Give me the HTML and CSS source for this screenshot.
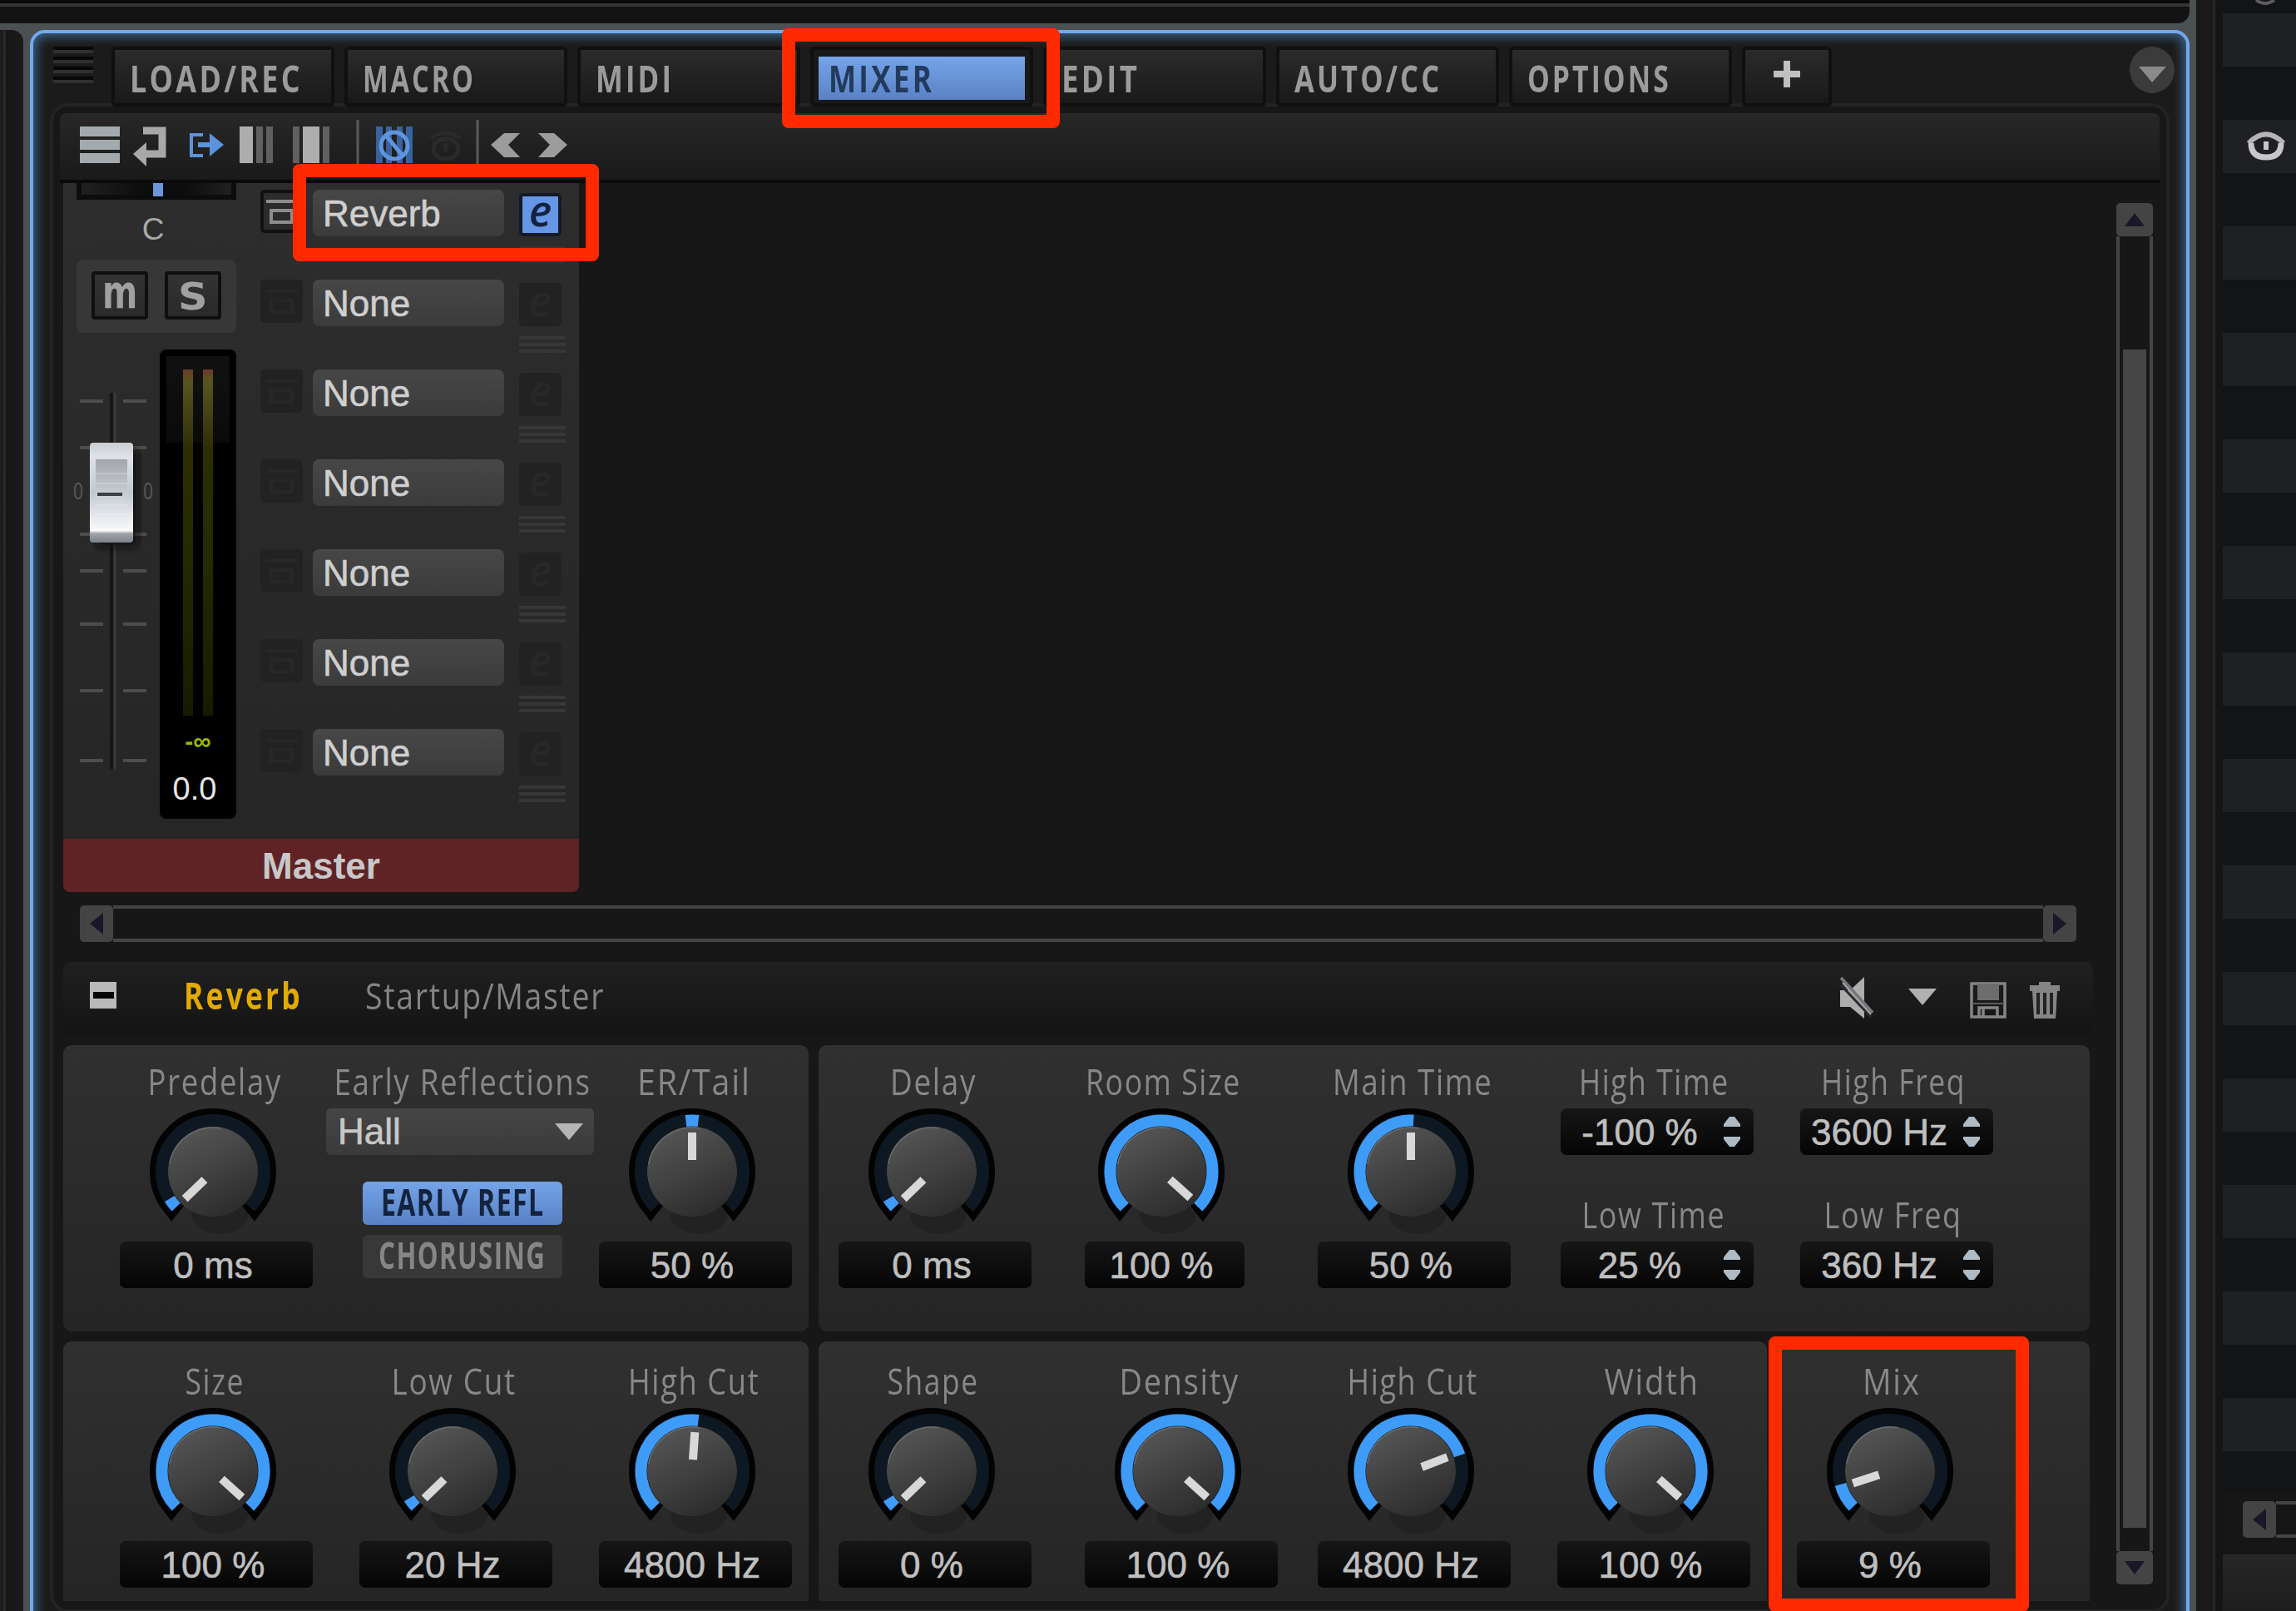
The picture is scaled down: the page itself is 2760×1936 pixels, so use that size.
FILE: index.html
```html
<!DOCTYPE html>
<html lang="en">
<head>
    <meta charset="UTF-8">
    <meta name="viewport" content="width=device-width, initial-scale=1.0">
    <title>Mixer</title>
    <link rel="stylesheet" href="styles.css">
</head>
<body>
    <div class="workspace">
        <div class="top-panel"></div>
        <div class="middle">
            <div class="left-panel"></div>
            <div class="window">
                <div class="tab-bar">
                    <div class="grip"></div>
                    <div class="tab"><span class="cond" data-w="202">LOAD/REC</span></div>
                    <div class="tab"><span class="cond" data-w="130">MACRO</span></div>
                    <div class="tab"><span class="cond" data-w="88">MIDI</span></div>
                    <div class="tab active"><span class="cond" data-w="121">MIXER</span></div>
                    <div class="tab"><span class="cond" data-w="88">EDIT</span></div>
                    <div class="tab"><span class="cond" data-w="171">AUTO/CC</span></div>
                    <div class="tab"><span class="cond" data-w="167">OPTIONS</span></div>
                    <div class="tab add">
                        <svg width="34" height="34" viewBox="0 0 34 34"><path d="M17 1v32M1 17h32" stroke="#c0c0c0" stroke-width="8"/></svg>
                    </div>
                    <div class="window-menu">
                        <svg width="54" height="56" viewBox="0 0 54 56"><ellipse cx="27" cy="28" rx="27" ry="28" fill="#3b3b3b"/><path d="M11 24h33L27 43z" fill="#8a8a8a"/></svg>
                    </div>
                </div>

                <div class="frame">
                    <div class="toolbar">
                        <svg width="624" height="60" viewBox="72 140 624 60">
                            <path d="M96 152h48v12H96zM96 168h48v12H96zM96 184h48v12H96z" fill="#a2aaae"/>
                            <path d="M172 157h23v28h-19" fill="none" stroke="#a8a8a8" stroke-width="9"/>
                            <path d="M160 185l16-14v29z" fill="#a8a8a8"/>
                            <path d="M244 162h-14v25h14" fill="none" stroke="#5c93dc" stroke-width="4"/>
                            <path d="M238 171h14v-11l17 14-17 14v-11h-14z" fill="#5c93dc"/>
                            <path d="M288 152h16v44h-16z" fill="#adadad"/>
                            <path d="M308 152h8v44h-8zM320 152h8v44h-8z" fill="#606060"/>
                            <path d="M352 152h8v44h-8zM388 152h8v44h-8z" fill="#606060"/>
                            <path d="M364 152h20v44h-20z" fill="#adadad"/>
                            <path d="M430 144v56M574 144v56" stroke="#5a5a5a" stroke-width="3"/>
                            <path d="M452 152h8v44h-8zM464 152h7v44h-7zM477 152h7v44h-7zM488 152h8v44h-8z" fill="#3a629d"/>
                            <circle cx="474" cy="175" r="16" fill="none" stroke="#5f95de" stroke-width="5"/>
                            <path d="M465 164l18 22" stroke="#5f95de" stroke-width="5"/>
                            <path d="M518 166q17-12 35 0" fill="none" stroke="#2a2a2a" stroke-width="4"/>
                            <ellipse cx="536" cy="179" rx="15" ry="12" fill="none" stroke="#2a2a2a" stroke-width="5"/>
                            <path d="M536 172v10" stroke="#2a2a2a" stroke-width="5"/>
                            <path d="M625 160h-19l-16 14 16 15h19l-14-15zM647 160h19l16 14-16 15h-19l14-15z" fill="#9c9c9c"/>
                        </svg>
                    </div>

                    <div class="body">
                        <div class="content">
                            <div class="strip">
                                <div class="strip-main">
                                    <div class="channel">
                                        <div class="pan"><div class="pan-mark"></div></div>
                                        <div class="pan-value">C</div>
                                        <div class="mute-solo">
                                            <div class="ms"><span class="m-glyph" data-w="36">m</span></div>
                                            <div class="ms"><span class="s-glyph" data-w="30">S</span></div>
                                        </div>
                                        <div class="levels">
                                            <svg class="fader" width="100" height="564" viewBox="88 420 100 564">
                                                <defs>
                                                    <linearGradient id="cap" x1="0" y1="0" x2="0" y2="1">
                                                        <stop offset="0" stop-color="#c9ced3"/><stop offset=".14" stop-color="#dfe3e7"/>
                                                        <stop offset=".5" stop-color="#c3c9cf"/><stop offset=".88" stop-color="#fafafc"/>
                                                        <stop offset=".91" stop-color="#9ea4aa"/><stop offset="1" stop-color="#7c8288"/>
                                                    </linearGradient>
                                                    <linearGradient id="capFace" x1="0" y1="0" x2="0" y2="1">
                                                        <stop offset="0" stop-color="#a3a7ab"/><stop offset=".35" stop-color="#bcc1c6"/>
                                                        <stop offset=".7" stop-color="#d8dde2"/><stop offset="1" stop-color="#f4f5f8"/>
                                                    </linearGradient>
                                                    <filter id="soft"><feGaussianBlur stdDeviation="4"/></filter>
                                                </defs>
                                                <path d="M134 472v452" stroke="#14161d" stroke-width="4"/>
                                                <path d="M138 472v452" stroke="#393a3d" stroke-width="3"/>
                                                <path d="M96 482h28m24 0h28M96 538h28m24 0h28M96 642h28m24 0h28M96 686h28m24 0h28M96 750h28m24 0h28M96 830h28m24 0h28M96 914h28m24 0h28" stroke="#4d4d4d" stroke-width="4"/>
                                                <rect x="116" y="540" width="50" height="118" rx="5" fill="#0c0c0c" opacity=".8" filter="url(#soft)"/>
                                                <rect x="108" y="532" width="52" height="120" rx="4" fill="url(#cap)"/>
                                                <rect x="115" y="552" width="38" height="82" fill="url(#capFace)"/>
                                                <path d="M115 569h38M115 581h38M115 607h38M115 618h38" stroke="#fff" stroke-width="2" opacity=".2"/>
                                                <path d="M117 594h30" stroke="#3c4044" stroke-width="4"/>
                                                <text x="88" y="600" class="fader-zero" textLength="12" lengthAdjust="spacingAndGlyphs">0</text>
                                                <text x="172" y="600" class="fader-zero" textLength="12" lengthAdjust="spacingAndGlyphs">0</text>
                                            </svg>
                                            <div class="meter">
                                                <div class="meter-bars"><i></i><i></i></div>
                                                <div class="peak">-∞</div>
                                                <div class="gain">0.0</div>
                                            </div>
                                        </div>
                                    </div>
                                    <div class="inserts" id="inserts"></div>
                                </div>
                                <div class="strip-name">Master</div>
                            </div>

                            <div class="hscroll">
                                <div class="hbtn"><svg width="16" height="26" viewBox="0 0 16 26"><path d="M16 0v26L0 13z" fill="#1a1728"/></svg></div>
                                <div class="htrack"></div>
                                <div class="hbtn"><svg width="16" height="26" viewBox="0 0 16 26"><path d="M0 0v26l16-13z" fill="#1a1728"/></svg></div>
                            </div>

                            <div class="fx-header">
                                <svg width="32" height="32" viewBox="0 0 32 32"><path d="M0 0h32v32H0z" fill="#b9b9b9"/><path d="M4 12h25v8H4z" fill="#050505"/></svg>
                                <span class="fx-name cond" data-w="137">Reverb</span>
                                <span class="fx-path cond" data-w="282">Startup/Master</span>
                                <svg class="fx-icons" width="270" height="56" viewBox="2208 1172 270 56">
                                    <path d="M2212 1190h12l17-16v50l-17-14h-12z" fill="#adadad"/>
                                    <path d="M2213 1184l36 38" stroke="#2a2a2a" stroke-width="3"/>
                                    <path d="M2213 1175l38 42" stroke="#77777d" stroke-width="4"/>
                                    <path d="M2215 1181l34 38" stroke="#a0a0a6" stroke-width="2"/>
                                    <path d="M2294 1188h34l-17 20z" fill="#b0b0b0"/>
                                    <path d="M2370 1182h40v40h-40z" fill="none" stroke="#858585" stroke-width="3.5"/>
                                    <path d="M2377 1182h26v20h-26z" fill="#6d6d6d"/>
                                    <path d="M2371 1206h38" stroke="#5c5c5c" stroke-width="2"/>
                                    <path d="M2379 1222v-11h22v11M2384 1211v11" fill="none" stroke="#858585" stroke-width="3.5"/>
                                    <path d="M2451 1180h14v4h11v7h-36v-7h11z" fill="#858585"/>
                                    <path d="M2443 1191h30l-2 33h-26z" fill="#858585"/>
                                    <path d="M2450 1193v26M2458 1193v26M2466 1193v26" stroke="#222" stroke-width="4"/>
                                </svg>
                            </div>

                            <div class="fx-row row-one">
                                <div class="fx-panel early">
                                    <div class="cell"><div class="label"><span class="cond" data-w="155">Predelay</span></div><div class="knob" data-angle="-134"></div><div class="value">0 ms</div></div>
                                    <div class="cell type">
                                        <div class="label"><span class="cond" data-w="303">Early Reflections</span></div>
                                        <div class="select">Hall<svg width="34" height="20" viewBox="0 0 34 20"><path d="M0 0h34L17 20z" fill="#b5b5b5"/></svg></div>
                                        <div class="toggle on"><span class="cond" data-w="191">EARLY REFL</span></div>
                                        <div class="toggle"><span class="cond" data-w="195">CHORUSING</span></div>
                                    </div>
                                    <div class="cell"><div class="label"><span class="cond" data-w="131">ER/Tail</span></div><div class="knob" data-angle="0" data-bipolar="1"></div><div class="value">50 %</div></div>
                                </div>
                                <div class="fx-panel tail">
                                    <div class="cell"><div class="label"><span class="cond" data-w="98">Delay</span></div><div class="knob" data-angle="-134"></div><div class="value">0 ms</div></div>
                                    <div class="cell room"><div class="label"><span class="cond" data-w="181">Room Size</span></div><div class="knob" data-angle="132"></div><div class="value">100 %</div></div>
                                    <div class="cell"><div class="label"><span class="cond" data-w="186">Main Time</span></div><div class="knob" data-angle="0"></div><div class="value">50 %</div></div>
                                    <div class="cell spins time">
                                        <div class="label"><span class="cond" data-w="175">High Time</span></div><div class="value spin">-100 %</div>
                                        <div class="label"><span class="cond" data-w="167">Low Time</span></div><div class="value spin">25 %</div>
                                    </div>
                                    <div class="cell spins">
                                        <div class="label"><span class="cond" data-w="168">High Freq</span></div><div class="value spin">3600 Hz</div>
                                        <div class="label"><span class="cond" data-w="160">Low Freq</span></div><div class="value spin">360 Hz</div>
                                    </div>
                                </div>
                            </div>

                            <div class="fx-row row-two">
                                <div class="fx-panel early">
                                    <div class="cell"><div class="label"><span class="cond" data-w="66">Size</span></div><div class="knob" data-angle="132"></div><div class="value">100 %</div></div>
                                    <div class="cell"><div class="label"><span class="cond" data-w="144">Low Cut</span></div><div class="knob" data-angle="-134"></div><div class="value">20 Hz</div></div>
                                    <div class="cell"><div class="label"><span class="cond" data-w="152">High Cut</span></div><div class="knob" data-angle="4"></div><div class="value">4800 Hz</div></div>
                                </div>
                                <div class="fx-panel shape">
                                    <div class="cell"><div class="label"><span class="cond" data-w="104">Shape</span></div><div class="knob" data-angle="-134"></div><div class="value">0 %</div></div>
                                    <div class="cell density"><div class="label"><span class="cond" data-w="138">Density</span></div><div class="knob" data-angle="132"></div><div class="value">100 %</div></div>
                                    <div class="cell"><div class="label"><span class="cond" data-w="151">High Cut</span></div><div class="knob" data-angle="69"></div><div class="value">4800 Hz</div></div>
                                    <div class="cell"><div class="label"><span class="cond" data-w="108">Width</span></div><div class="knob" data-angle="132"></div><div class="value">100 %</div></div>
                                </div>
                                <div class="fx-panel mix">
                                    <div class="cell"><div class="label"><span class="cond" data-w="64">Mix</span></div><div class="knob" data-angle="-108"></div><div class="value">9 %</div></div>
                                </div>
                            </div>
                        </div>

                        <div class="vscroll">
                            <div class="vbtn"><svg width="24" height="16" viewBox="0 0 24 16"><path d="M0 16h24L12 0z" fill="#1a1728"/></svg></div>
                            <div class="vtrack"><div class="vthumb"></div></div>
                            <div class="vbtn"><svg width="24" height="16" viewBox="0 0 24 16"><path d="M0 0h24L12 16z" fill="#1a1728"/></svg></div>
                        </div>
                    </div>
                </div>
            </div>
        </div>
    </div>

    <div class="divider"></div>

    <div class="track-list">
        <div class="track-rows">
            <svg width="26" height="8" viewBox="0 0 26 8"><path d="M2 0q11 8 22 0" fill="none" stroke="#5c5c60" stroke-width="4"/></svg>
            <svg class="eye" width="48" height="36" viewBox="0 0 48 36">
                <path d="M3 14Q24-7 45 14" fill="none" stroke="#b4b4ba" stroke-width="6"/>
                <path d="M6 14q0 17 18 17t18-17" fill="none" stroke="#c6c6cc" stroke-width="7"/>
                <path d="M24 12v10" stroke="#c6c6cc" stroke-width="6"/>
            </svg>
        </div>
        <div class="track-scroll">
            <div class="hbtn"><svg width="16" height="26" viewBox="0 0 16 26"><path d="M16 0v26L0 13z" fill="#1a1728"/></svg></div>
            <div class="htrack"></div>
        </div>
        <div class="track-footer"></div>
    </div>

    <div class="mark mark-mixer"></div>
    <div class="mark mark-reverb"></div>
    <div class="mark mark-mix"></div>

    <script src="script.js"></script>
</body>
</html>
```

FILE: styles.css
```css
* {
    box-sizing: border-box;
}
body {
    margin: 0;
    width: 2760px;
    height: 1936px;
    overflow: hidden;
    position: relative;
    display: flex;
    background: #4b5153;
    color: #c4c4c4;
    font-family: "Liberation Sans", Arial, sans-serif;
    font-size: 44px;
}
svg {
    display: block;
    flex: none;
}
.cond {
    display: inline-block;
    flex: none;
    font-family: "Open Sans", sans-serif;
    font-size: 44px;
    font-weight: 500;
    line-height: 60px;
    letter-spacing: 2px;
    white-space: nowrap;
}

/* outer layout */
.workspace {
    width: 2640px;
    flex: none;
}
.top-panel {
    width: 2632px;
    height: 28px;
    background: linear-gradient(#0a0a0a 4px, #343434 4px, #343434 8px, #131313 8px);
    border-bottom-right-radius: 14px;
}
.middle {
    display: flex;
    gap: 8px;
    padding-top: 8px;
    height: 1908px;
}
.left-panel {
    width: 28px;
    background: linear-gradient(90deg, #1c1c1c 4px, #282828 4px, #282828 7px, #161616 7px, #1a1a1a);
    border-radius: 0 14px 0 0;
}
.window {
    width: 2596px;
    height: 1930px;
    flex: none;
    border: 4px solid #72a9ee;
    border-radius: 18px;
    background: #1b1b1b;
    box-shadow: inset 0 0 14px 3px #3f6a92;
}
.divider {
    width: 32px;
    flex: none;
    background: linear-gradient(90deg, #191919 20px, #252525 20px, #252525 23px, #151515 23px);
}

/* tabs */
.tab-bar {
    position: relative;
    display: flex;
    height: 88px;
    padding: 16px 0 0 24px;
}
.grip {
    width: 48px;
    height: 44px;
    margin-right: 22px;
    background: repeating-linear-gradient(#080808 0, #080808 4px, #303030 4px, #303030 8px, #1b1b1b 8px, #1b1b1b 12px);
}
.tab {
    width: 268px;
    height: 72px;
    margin-right: 12px;
    flex: none;
    border: 4px solid #101010;
    border-radius: 5px;
    background: linear-gradient(#2b2b2b, #191919);
    display: flex;
    align-items: center;
    padding: 0 0 0 18px;
    color: #9b9b9b;
}
.tab .cond {
    font-weight: 700;
    padding-top: 3px;
    letter-spacing: 4px;
}
.tab.active {
    background: linear-gradient(#75a4e8, #5a82c6) 6px 8px / 248px 52px no-repeat, #191919;
    color: #223a5c;
}
.tab.add {
    width: 108px;
    padding: 0 0 6px;
    justify-content: center;
}
.window-menu {
    margin-left: auto;
    margin-right: 14px;
}

/* framed area */
.frame {
    width: 2548px;
    height: 1814px;
    margin-left: 20px;
    margin-top: -4px;
    border: 4px solid #232323;
    border-radius: 22px;
    background: #171717;
    padding: 8px;
}
.toolbar {
    height: 84px;
    padding-top: 4px;
    background: linear-gradient(#272727, #1a1a1a);
    border-bottom: 4px solid #0a0a0a;
    border-radius: 8px 8px 0 0;
}
.body {
    display: flex;
    padding-left: 4px;
}
.content {
    width: 2440px;
}

/* channel strip */
.strip {
    width: 620px;
    height: 852px;
}
.strip-main {
    display: flex;
    height: 788px;
    background: linear-gradient(#2d2d2d, #262626);
}
.channel {
    width: 224px;
    padding-left: 16px;
}
.pan {
    width: 192px;
    height: 20px;
    border: 6px solid #0c0c0c;
    border-top: 0;
    background: linear-gradient(90deg, #202020, #0d0d0d 40%, #0d0d0d 70%, #202020);
    padding-left: 86px;
}
.pan-mark {
    width: 12px;
    height: 16px;
    background: #6c97dc;
}
.pan-value {
    width: 184px;
    margin-top: 14px;
    text-align: center;
    font-size: 37px;
    line-height: 44px;
    color: #a8a8a8;
}
.mute-solo {
    width: 192px;
    height: 88px;
    margin-top: 14px;
    border-radius: 8px;
    background: #373737;
    display: flex;
    justify-content: center;
    gap: 20px;
    padding-top: 14px;
}
.ms {
    width: 68px;
    height: 58px;
    border: 4px solid #0f0f0f;
    border-radius: 4px;
    background: linear-gradient(#333336, #2a2a2c);
    display: flex;
    justify-content: center;
    font-family: "DejaVu Sans", sans-serif;
    font-weight: 700;
    color: #a0a0a0;
}
.m-glyph {
    font-size: 56px;
    line-height: 42px;
}
.s-glyph {
    font-size: 44px;
    line-height: 53px;
}
.levels {
    display: flex;
    margin: 20px 0 0 -4px;
}
.fader-zero {
    font-family: "Open Sans", sans-serif;
    font-size: 28px;
    fill: #5a5a5a;
}
.meter {
    width: 92px;
    height: 564px;
    margin-left: 4px;
    border-radius: 8px;
    background: linear-gradient(#111, #0a0a0a) 8px 8px / 76px 104px no-repeat, #000;
    text-align: center;
}
.meter-bars {
    display: flex;
    gap: 12px;
    padding: 24px 0 0 28px;
}
.meter-bars i {
    width: 12px;
    height: 416px;
    background: linear-gradient(#6b3a28 0, #57551f 14px, #3c3a10 70px, #2c2d02 96px, #252a00 220px, #161b00);
}
.peak {
    margin-top: 18px;
    font-size: 30px;
    font-weight: 700;
    line-height: 26px;
    color: #9cb800;
}
.gain {
    margin: 22px 8px 0 0;
    font-size: 38px;
    line-height: 44px;
    color: #e6e6e6;
}
.inserts {
    padding: 8px 0 0 13px;
}
.slot {
    display: flex;
    height: 108px;
}
.slot-bypass {
    width: 51px;
    height: 52px;
    border-radius: 5px;
    background: #222;
    color: #272727;
}
.slot-name {
    width: 230px;
    height: 56px;
    margin: 0 18px 0 12px;
    padding-left: 12px;
    border-radius: 8px;
    background: linear-gradient(#474747, #3b3b3b);
    line-height: 57px;
    color: #cfcfcf;
    -webkit-text-stroke: 0.6px #cfcfcf;
}
.slot-edit {
    width: 51px;
    height: 52px;
    margin-top: 4px;
    border-radius: 5px;
    background: #222;
    color: #282828;
    font: italic 600 52px/40px "Open Sans", sans-serif;
    text-align: center;
}
.slot-grip {
    width: 56px;
    height: 20px;
    margin-top: 12px;
    background: repeating-linear-gradient(#373737 0, #373737 4px, transparent 4px, transparent 8px);
}
.slot.used .slot-bypass {
    border: 4px solid #111;
    background: #2b2b2b;
    color: #8d8d8d;
}
.slot.used .slot-bypass svg {
    margin: -4px;
}
.slot.used .slot-edit {
    border: 4px solid #131a28;
    background: #6696e6;
    color: #14233d;
    line-height: 32px;
}
.strip-name {
    height: 64px;
    border-radius: 0 0 8px 8px;
    background: #5f2326;
    text-align: center;
    font-weight: 700;
    line-height: 66px;
    color: #c8c8c8;
}

/* scrollbars */
.hscroll {
    width: 2400px;
    height: 44px;
    margin: 16px 0 0 20px;
    display: flex;
}
.hbtn {
    width: 40px;
    height: 44px;
    flex: none;
    display: flex;
    align-items: center;
    justify-content: center;
    background: #444;
    border-radius: 5px;
}
.htrack {
    flex: 1;
    border-top: 4px solid #444;
    border-bottom: 4px solid #444;
}
.vscroll {
    width: 44px;
    height: 1660px;
    margin: 24px 0 0 28px;
    display: flex;
    flex-direction: column;
}
.vbtn {
    height: 40px;
    display: flex;
    align-items: center;
    justify-content: center;
    background: #444;
    border-radius: 5px;
}
.vtrack {
    flex: 1;
    border: solid #444;
    border-width: 0 4px;
    padding: 136px 4px 0;
}
.vthumb {
    height: 1416px;
    background: #464646;
}

/* effect editor */
.fx-header {
    height: 88px;
    margin-top: 24px;
    border-radius: 10px;
    background: linear-gradient(#202020, #141414);
    display: flex;
    align-items: center;
    padding: 0 38px 8px 32px;
}
.fx-name {
    margin-left: 81px;
    font-weight: 700;
    letter-spacing: 4px;
    color: #e3aa00;
}
.fx-path {
    color: #858585;
}
.fx-icons {
    margin-left: auto;
    margin-top: 8px;
}
.fx-row {
    display: flex;
    gap: 12px;
    margin-top: 12px;
}
.fx-panel {
    display: flex;
    gap: 56px;
    border-radius: 10px;
    background: linear-gradient(#303030, #252525);
}
.row-one .fx-panel {
    height: 344px;
    padding-top: 13px;
}
.row-two .fx-panel {
    height: 312px;
    padding-top: 17px;
    border-radius: 10px 10px 0 0;
}
.fx-panel.early {
    width: 896px;
    padding-left: 68px;
}
.fx-panel.tail {
    width: 1528px;
    padding-left: 24px;
}
.fx-panel.shape {
    width: 1140px;
    padding-left: 24px;
}
.fx-panel.mix {
    width: 376px;
    padding-left: 24px;
}
.cell {
    width: 232px;
    flex: none;
}
.cell.room {
    width: 192px;
    margin: 0 32px 0 8px;
}
.cell.density {
    margin: 0 -8px 0 8px;
}
.cell.time {
    margin-left: 4px;
}
.cell.type {
    width: 324px;
    margin: 0 -52px 0 -40px;
}
.label {
    display: flex;
    justify-content: center;
    height: 60px;
    margin-right: 4px;
    color: #888;
}
.spins .label {
    margin-right: 8px;
}
.type .label {
    margin-right: -4px;
}
.knob {
    height: 160px;
    margin: -1px 8px 4px 0;
    display: flex;
    justify-content: center;
}
.value {
    height: 56px;
    padding-right: 8px;
    border-radius: 7px;
    background: linear-gradient(#161616, #050505);
    text-align: center;
    line-height: 57px;
    color: #bfbfbf;
    -webkit-text-stroke: 0.6px #bfbfbf;
}
.spins .value {
    margin-top: 3px;
}
.spins .value + .label {
    margin-top: 41px;
}
.spin {
    display: flex;
    justify-content: space-between;
    align-items: center;
    padding: 0 16px 0 5px;
}
.spin-text {
    width: 180px;
    text-align: center;
}
.select {
    width: 322px;
    height: 56px;
    margin-top: 3px;
    padding: 0 13px 0 14px;
    border-radius: 6px;
    background: linear-gradient(#464646, #3a3a3a);
    display: flex;
    align-items: center;
    justify-content: space-between;
    line-height: 58px;
    color: #c8c8c8;
    -webkit-text-stroke: 0.6px #c8c8c8;
}
.toggle {
    width: 240px;
    height: 52px;
    margin: 12px 0 0 44px;
    border-radius: 6px;
    background: #383838;
    display: flex;
    justify-content: center;
    color: #868686;
}
.toggle .cond {
    font-weight: 700;
    line-height: 48px;
}
.toggle.on {
    margin-top: 32px;
    background: linear-gradient(#74a3e8, #5881c5);
    color: #14233d;
}

/* right side */
.track-list {
    width: 88px;
    flex: none;
    display: flex;
    flex-direction: column;
    background: #161616;
}
.track-rows {
    height: 1792px;
    padding: 0 0 0 28px;
    background: repeating-linear-gradient(#131416 0, #131416 64px, #1f2022 64px, #1f2022 128px) 0 -48px / 88px 1920px;
}
.track-rows svg {
    margin-left: 10px;
}
.track-rows .eye {
    margin: 150px 0 0 0;
}
.track-scroll {
    height: 44px;
    margin: 12px 0 20px 24px;
    display: flex;
}
.track-footer {
    flex: 1;
    background: linear-gradient(#272727, #1d1d1d);
}

/* highlight boxes over the interface */
.mark {
    position: absolute;
    border: 16px solid #ff2a00;
    border-radius: 8px;
}
.mark-mixer {
    left: 940px;
    top: 34px;
    width: 334px;
    height: 120px;
}
.mark-reverb {
    left: 352px;
    top: 197px;
    width: 368px;
    height: 117px;
}
.mark-mix {
    left: 2126px;
    top: 1606px;
    width: 313px;
    height: 331px;
}
```

FILE: script.js
```js
// insert slots
const slots = ['Reverb', 'None', 'None', 'None', 'None', 'None', 'None'];
document.getElementById('inserts').innerHTML = slots.map((name, i) => `
    <div class="slot ${i === 0 ? 'used' : ''}">
        <div class="slot-bypass"><svg width="51" height="52" viewBox="0 0 51 52" fill="none" stroke="currentColor" stroke-width="4"><path d="M7 14h38M13 25h25v14H13z"/></svg></div>
        <div class="slot-name">${name}</div>
        <div><div class="slot-edit">e</div><div class="slot-grip"></div></div>
    </div>`).join('');

// knobs: 0 degrees points up, the ring runs from -135 to 135
function point(r, deg) {
    const a = deg * Math.PI / 180;
    return (r * Math.sin(a)).toFixed(2) + ' ' + (-r * Math.cos(a)).toFixed(2);
}

function arc(r, from, to) {
    return `M${point(r, from)}A${r} ${r} 0 ${to - from > 180 ? 1 : 0} 1 ${point(r, to)}`;
}

document.querySelectorAll('.knob').forEach((el, i) => {
    const angle = Number(el.dataset.angle);
    const from = el.dataset.bipolar ? -7 : -134;
    const to = el.dataset.bipolar ? 7 : Math.max(angle + 3, -122);
    el.innerHTML = `
        <svg width="160" height="160" viewBox="-80 -80 160 160">
            <defs>
                <linearGradient id="body${i}" x1=".2" y1="0" x2=".7" y2="1">
                    <stop offset="0" stop-color="#575757"/><stop offset="1" stop-color="#2b2b2b"/>
                </linearGradient>
            </defs>
            <ellipse cx="8" cy="52" rx="34" ry="23" fill="#222"/>
            <path d="${arc(63, -135, 135)}" fill="none" stroke="#030303" stroke-width="26"/>
            <path d="M-58 49L-50 60-34 40-44 38zM58 49L50 60 34 40 44 38z" fill="#030303"/>
            <path d="${arc(61.5, -134, 134)}" fill="none" stroke="#0d1823" stroke-width="15"/>
            <path d="${arc(61.5, from, Math.min(to, 134))}" fill="none" stroke="#3e9cf8" stroke-width="14"/>
            <circle r="54" fill="url(#body${i})"/>
            <path d="${arc(53, -80, 10)}" fill="none" stroke="#6a6a6a" stroke-width="1.5"/>
            <path d="M0-47V-14" stroke="#d8d8d8" stroke-width="10" transform="rotate(${angle})"/>
        </svg>`;
});

// spin boxes
document.querySelectorAll('.spin').forEach(el => {
    el.innerHTML = `<span class="spin-text">${el.textContent}</span>
        <svg width="20" height="36" viewBox="0 0 20 36"><path d="M0 12v-3L7 0h6l7 9v3zM0 24v3l7 9h6l7-9v-3z" fill="#aebbc4"/></svg>`;
});

// squeeze the condensed captions to their widths
document.querySelectorAll('[data-w]').forEach(el => {
    const target = Number(el.dataset.w) + 6;
    const natural = el.offsetWidth;
    const centred = el.closest('.label, .toggle, .ms');
    el.style.transformOrigin = centred ? 'center' : 'left';
    el.style.transform = `scaleX(${target / natural})`;
    if (!centred) {
        el.style.marginRight = (target - natural) + 'px';
    }
    if (el.classList.contains('fx-path')) {
        el.style.marginLeft = '75px';
    }
});
```
